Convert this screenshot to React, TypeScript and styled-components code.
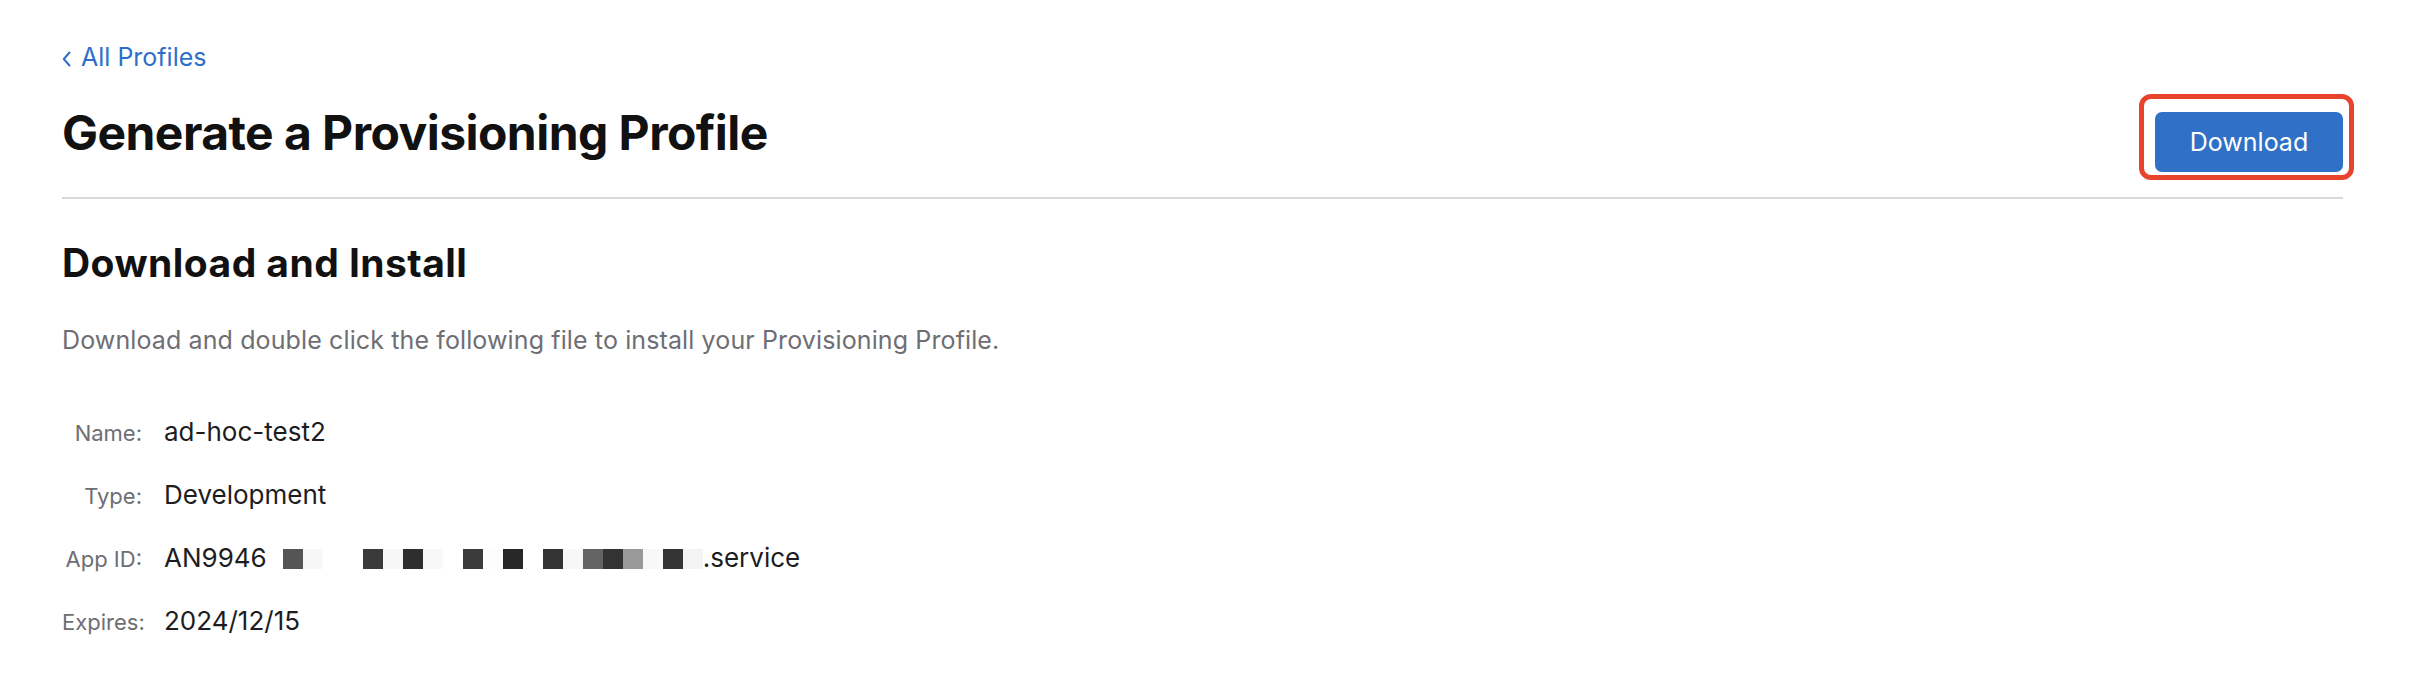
import React from "react";
import styled, { createGlobalStyle } from "styled-components";

const Global = createGlobalStyle`
  html, body { margin: 0; padding: 0; background: #ffffff; }
  body { font-family: Inter, "Noto Sans", "Liberation Sans", sans-serif; -webkit-font-smoothing: antialiased; }
`;

const Page = styled.main`
  display: flex;
  flex-direction: column;
  padding: 41px 75px 40px 62px;
`;

const BackLink = styled.a`
  display: flex;
  align-items: center;
  gap: 10px;
  font-size: 25px;
  line-height: 32px;
  color: #2f6fc8;
  text-decoration: none;
  align-self: flex-start;
`;

const Chevron = styled.svg`
  width: 9px;
  height: 16px;
  margin-top: 4px;
`;

const HeaderRow = styled.div`
  display: flex;
  justify-content: space-between;
  align-items: flex-start;
  margin-top: 31px;
`;

const Title = styled.h1`
  margin: 0;
  font-size: 48px;
  line-height: 58px;
  font-weight: 700;
  color: #111111;
  letter-spacing: -0.55px;
`;

const Highlight = styled.div`
  position: relative;
  margin-top: 8px;
  &::after {
    content: "";
    position: absolute;
    top: -18px;
    left: -16px;
    right: -11px;
    bottom: -8px;
    border: 5px solid #e8432b;
    border-radius: 12px;
    pointer-events: none;
  }
`;

const PrimaryButton = styled.button`
  display: flex;
  align-items: center;
  justify-content: center;
  width: 188px;
  height: 60px;
  border: none;
  border-radius: 7px;
  background: #3070c6;
  color: #ffffff;
  font-family: inherit;
  font-size: 25px;
  font-weight: 400;
  cursor: pointer;
`;

const Divider = styled.hr`
  margin: 25px 0 0;
  border: none;
  height: 2px;
  background: #d9d9d9;
`;

const SectionTitle = styled.h2`
  margin: 43px 0 0;
  font-size: 39px;
  line-height: 42px;
  font-weight: 700;
  color: #111111;
  letter-spacing: 0.45px;
`;

const Description = styled.p`
  margin: 41px 0 0;
  font-size: 25px;
  line-height: 30px;
  color: #6e6e73;
  letter-spacing: 0.12px;
`;

const DetailList = styled.dl`
  display: flex;
  flex-direction: column;
  gap: 32px;
  margin: 62px 0 0;
`;

const DetailRow = styled.div`
  display: flex;
  align-items: baseline;
  gap: 22px;
`;

const Label = styled.dt`
  width: 80px;
  text-align: right;
  white-space: nowrap;
  font-size: 22px;
  line-height: 30px;
  color: #6e6e73;
`;

const Value = styled.dd`
  margin: 0;
  display: flex;
  align-items: baseline;
  font-size: 26px;
  line-height: 30px;
  color: #1d1d1f;
`;

const Mosaic = styled.span`
  display: inline-flex;
  align-self: center;
  margin-left: 16px;
  margin-top: 2px;
`;

const Cell = styled.span<{ $c: string }>`
  width: 20px;
  height: 20px;
  background: ${(p) => p.$c};
`;

const mosaic = [
  "#555555", "#f7f7f7", "#ffffff", "#ffffff", "#3a3a3a", "#f7f7f7", "#2e2e2e",
  "#f8f8f8", "#ffffff", "#3b3b3b", "#fdfdfd", "#272727", "#ffffff", "#333333",
  "#f7f7f7", "#636363", "#333333", "#999999", "#f8f8f8", "#333333", "#f3f3f3",
];

export default function App() {
  return (
    <>
      <Global />
      <Page>
        <BackLink href="#">
          <Chevron viewBox="0 0 9 16">
            <path d="M7.5 1.5 L1.8 8 L7.5 14.5" fill="none" stroke="currentColor" strokeWidth="2" strokeLinecap="round" strokeLinejoin="round" />
          </Chevron>
          All Profiles
        </BackLink>
        <HeaderRow>
          <Title>Generate a Provisioning Profile</Title>
          <Highlight>
            <PrimaryButton>Download</PrimaryButton>
          </Highlight>
        </HeaderRow>
        <Divider />
        <SectionTitle>Download and Install</SectionTitle>
        <Description>
          Download and double click the following file to install your Provisioning Profile.
        </Description>
        <DetailList>
          <DetailRow>
            <Label>Name:</Label>
            <Value>ad-hoc-test2</Value>
          </DetailRow>
          <DetailRow>
            <Label>Type:</Label>
            <Value>Development</Value>
          </DetailRow>
          <DetailRow>
            <Label>App ID:</Label>
            <Value>
              AN9946
              <Mosaic>
                {mosaic.map((c, i) => (
                  <Cell key={i} $c={c} />
                ))}
              </Mosaic>
              .service
            </Value>
          </DetailRow>
          <DetailRow>
            <Label>Expires:</Label>
            <Value>2024/12/15</Value>
          </DetailRow>
        </DetailList>
      </Page>
    </>
  );
}
